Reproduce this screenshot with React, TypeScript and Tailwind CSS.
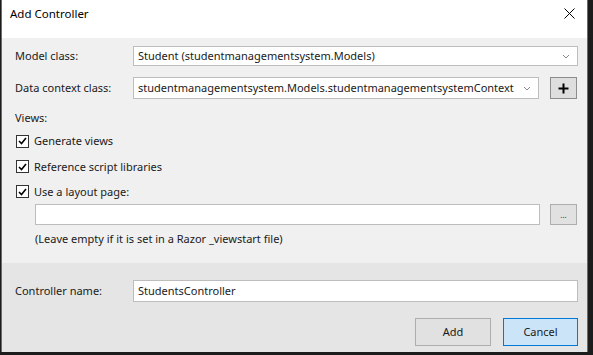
const font = { fontFamily: '"Noto Sans", "Open Sans", sans-serif' };

function Chevron() {
  return (
    <svg width="8" height="5" viewBox="0 0 8 5" className="shrink-0">
      <path d="M1 1 L4 4 L7 1" fill="none" stroke="#8a8a8a" strokeWidth="1" />
    </svg>
  );
}

function Combo({ text, className }: { text: string; className: string }) {
  return (
    <div className={`flex items-center border border-[#bdbdbd] bg-white pl-[4px] pr-[7px] ${className}`}>
      <span className="flex-1 truncate text-[#1a1a1a]">{text}</span>
      <Chevron />
    </div>
  );
}

function Check({ label }: { label: string }) {
  return (
    <div className="flex items-center gap-[5px] pl-[14px]">
      <div className="flex h-[13px] w-[13px] items-center justify-center border border-[#333333] bg-white">
        <svg width="9" height="8" viewBox="0 0 9 8">
          <path d="M1 4 L3.5 6.5 L8 1" fill="none" stroke="#000" strokeWidth="1.6" />
        </svg>
      </div>
      <span className="text-[#1a1a1a]">{label}</span>
    </div>
  );
}

export default function App() {
  return (
    <div className="flex h-[355px] w-[593px] items-start bg-[#1c1c1c] text-[11px] leading-[16px]" style={font}>
      <div className="ml-px flex h-[352px] w-[587px] flex-col border-x border-[#2b79c9]">
        <div className="flex h-[38px] shrink-0 items-start justify-between bg-white pl-[8px] pr-[12px] pt-[6px]">
          <span className="text-[11.5px] leading-[16px] text-black">Add Controller</span>
          <svg width="11" height="11" viewBox="0 0 11 11" className="mt-[2px]">
            <path d="M0.5 0.5 L10.5 10.5 M10.5 0.5 L0.5 10.5" stroke="#000" strokeWidth="1" />
          </svg>
        </div>

        <div className="flex h-[225px] shrink-0 flex-col bg-[#f0f0f0] pr-[9px] pt-[8px]">
          <div className="flex h-[20px] items-stretch">
            <span className="flex w-[131px] items-center pl-[13px] text-[#1a1a1a]">Model class:</span>
            <Combo text="Student (studentmanagementsystem.Models)" className="flex-1" />
          </div>
          <div className="mt-[11px] flex h-[22px] items-stretch">
            <span className="flex w-[131px] items-center pl-[13px] text-[#1a1a1a]">Data context class:</span>
            <Combo text="studentmanagementsystem.Models.studentmanagementsystemContext" className="w-[406px]" />
            <div className="ml-[11px] flex w-[27px] items-center justify-center border border-[#8c8c8c] bg-[#dedede]">
              <svg width="11" height="11" viewBox="0 0 11 11">
                <path d="M5.5 0.5 V10.5 M0.5 5.5 H10.5" stroke="#000" strokeWidth="2" />
              </svg>
            </div>
          </div>
          <div className="mt-[9px] flex h-[20px] items-center pl-[13px] text-[#1a1a1a]">Views:</div>
          <div className="flex h-[26px] items-center">
            <Check label="Generate views" />
          </div>
          <div className="flex h-[25px] items-center">
            <Check label="Reference script libraries" />
          </div>
          <div className="flex h-[25px] items-center">
            <Check label="Use a layout page:" />
          </div>
          <div className="flex h-[21px] items-stretch pl-[33px]">
            <div className="w-[505px] border border-[#bdbdbd] bg-white" />
            <div className="ml-[10px] flex w-[27px] items-center justify-center border border-[#adadad] bg-[#e1e1e1] text-[8px] text-[#333]">
              ...
            </div>
          </div>
          <div className="flex h-[28px] items-center pl-[33px] text-[#1a1a1a]">
            (Leave empty if it is set in a Razor _viewstart file)
          </div>
        </div>

        <div className="flex flex-1 flex-col bg-[#e5e5e5] pr-[9px] pt-[17px]">
          <div className="flex h-[22px] items-stretch">
            <span className="flex w-[131px] items-center pl-[13px] text-[#1a1a1a]">Controller name:</span>
            <div className="flex flex-1 items-center border border-[#bdbdbd] bg-white pl-[4px] text-[#1a1a1a]">
              StudentsController
            </div>
          </div>
          <div className="mt-[16px] flex h-[28px] justify-end gap-[12px]">
            <div className="flex w-[76px] items-center justify-center border border-[#adadad] bg-[#e1e1e1] text-[#1a1a1a]">
              Add
            </div>
            <div className="flex w-[75px] items-center justify-center border border-[#0078d7] bg-[#cce4f7] text-[#1a1a1a]">
              Cancel
            </div>
          </div>
        </div>
      </div>
    </div>
  );
}
